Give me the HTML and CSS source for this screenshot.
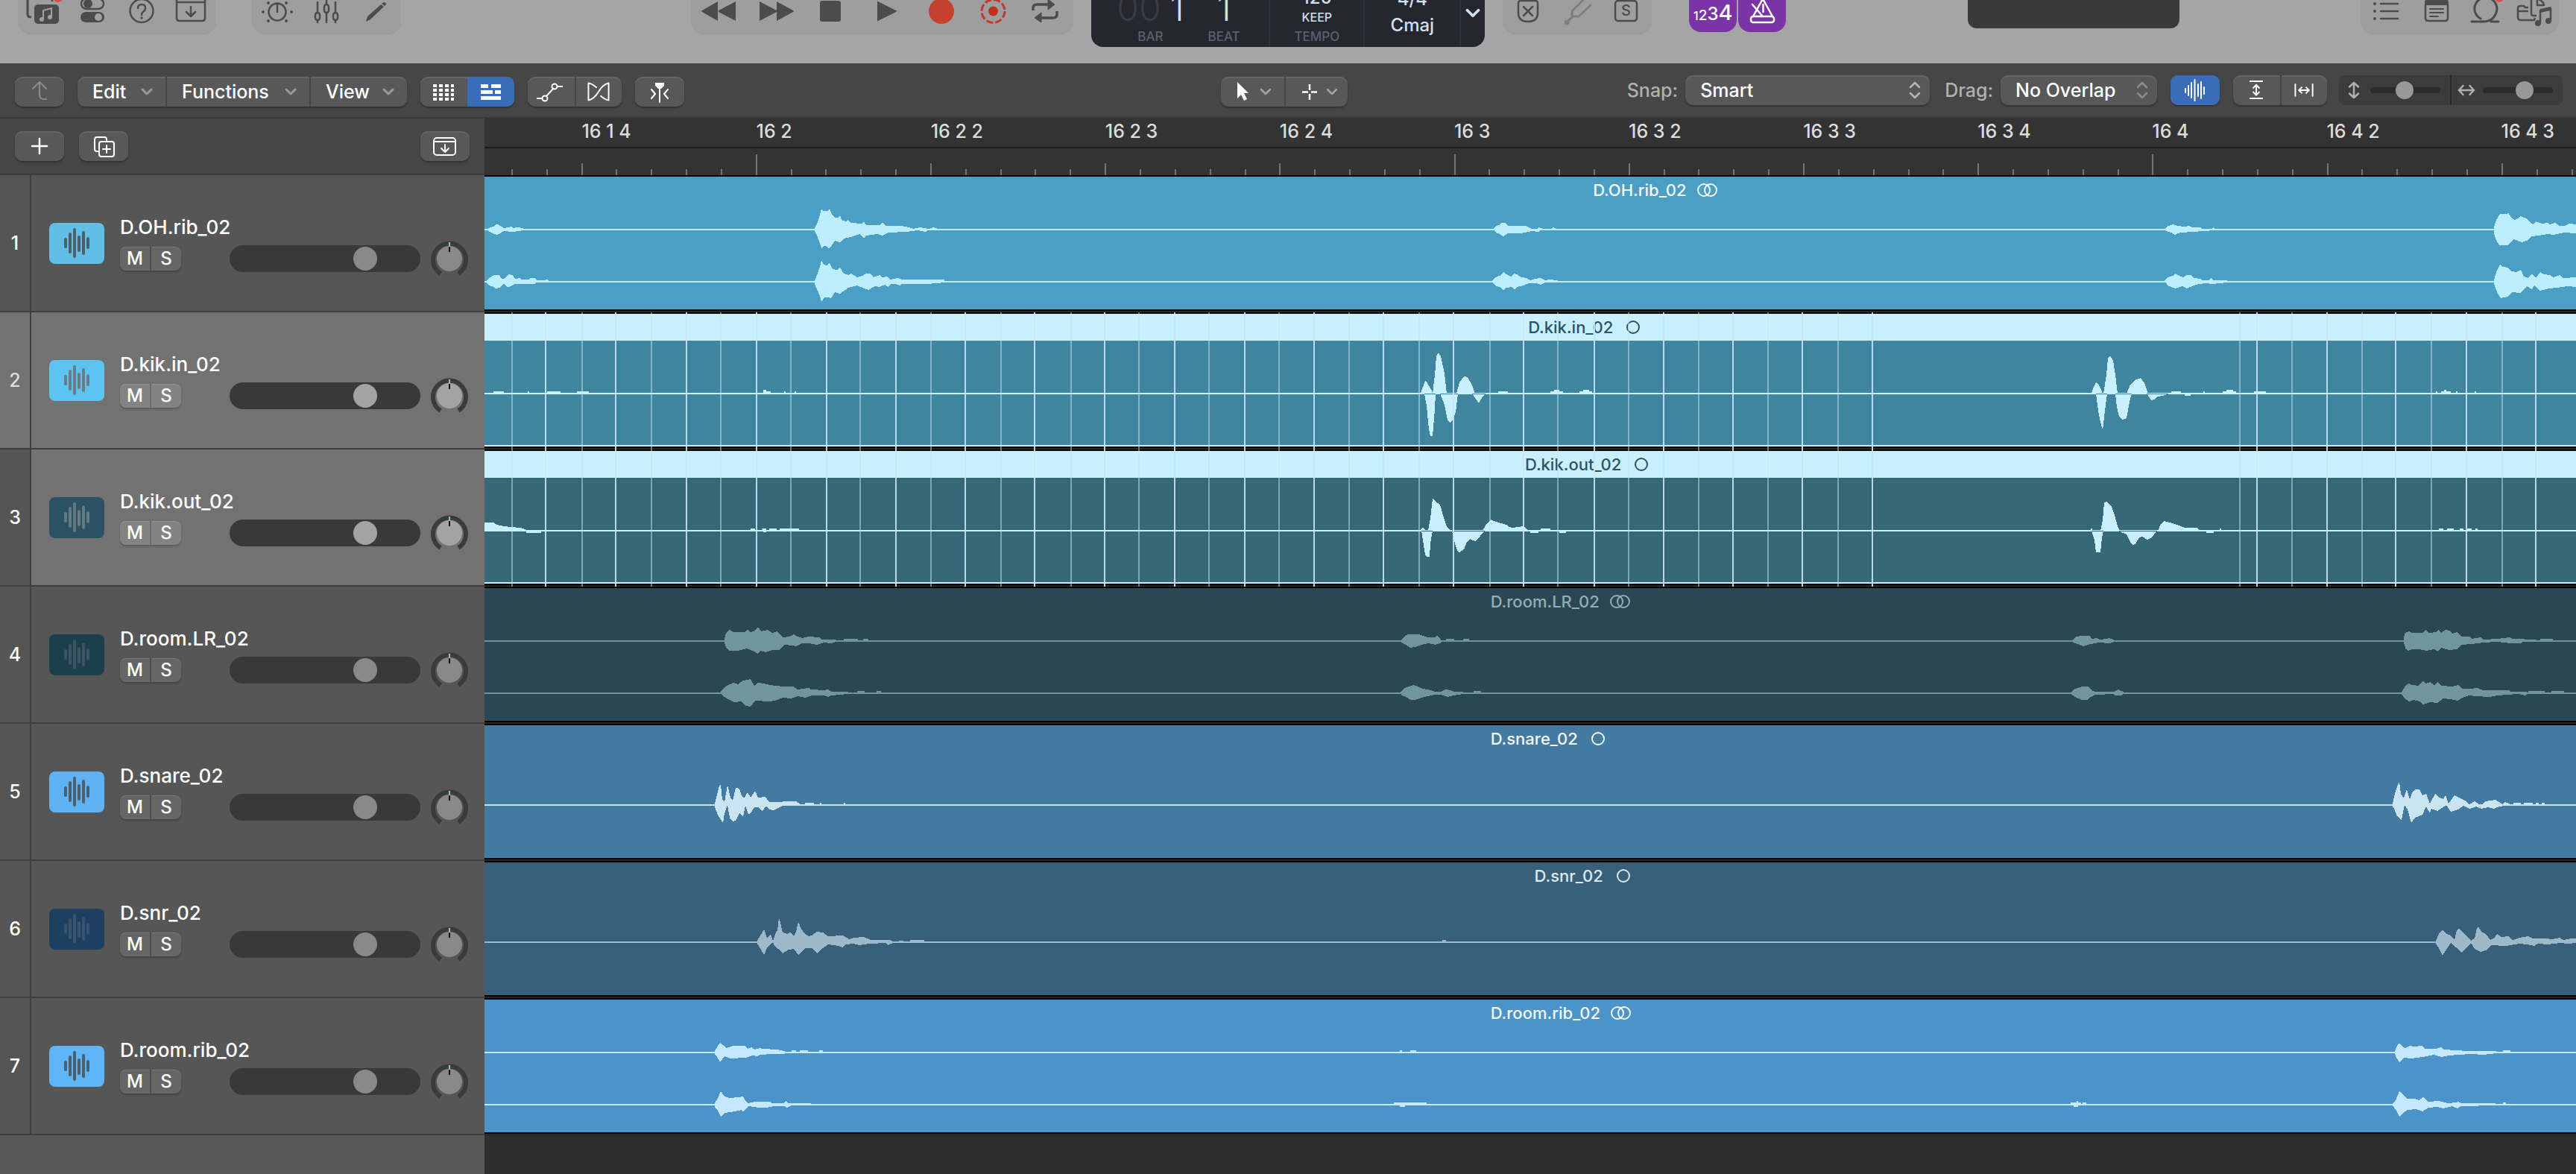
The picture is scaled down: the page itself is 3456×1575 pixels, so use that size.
FILE: index.html
```html
<!DOCTYPE html>
<html lang="en">
<head>
<meta charset="utf-8">
<meta name="viewport" content="width=device-width, initial-scale=1">
<title>Tracks</title>
<link rel="stylesheet" href="styles.css">
</head>
<body>
<svg class="defs" aria-hidden="true">
  <symbol id="chev" viewBox="0 0 16 10"><path d="M2 2l6 6 6-6" fill="none" stroke="currentColor" stroke-width="3" stroke-linecap="round" stroke-linejoin="round"/></symbol>
  <symbol id="wave" viewBox="0 0 36 40"><path d="M3 15v10M9 8v24M15 2v36M21 12v18M27 6v28M33 14v12" fill="none" stroke="currentColor" stroke-width="4" stroke-linecap="round"/></symbol>
  <symbol id="knob" viewBox="0 0 50 50"><path d="M13 46A22 22 0 1 1 37 46" fill="none" stroke="#3b3b3b" stroke-width="6"/><circle cx="25" cy="26" r="17" fill="currentColor"/><path d="M25 4v6" stroke="#8fce88" stroke-width="2"/><path d="M25 10v7" stroke="#111" stroke-width="2"/></symbol>
  <symbol id="mono" viewBox="0 0 22 22"><circle cx="11" cy="11" r="8" fill="none" stroke="currentColor" stroke-width="2"/></symbol>
  <symbol id="stereo" viewBox="0 0 30 22"><g fill="none" stroke="currentColor" stroke-width="2"><circle cx="11" cy="11" r="8"/><circle cx="20" cy="11" r="8"/></g></symbol>
  <symbol id="transients" viewBox="0 0 2806 184" preserveAspectRatio="none">
    <path class="t-weak" d="M37 0v184M131 0v184M224 0v184M317 0v184M411 0v184M504 0v184M599 0v184M693 0v184M787 0v184M878 0v184M972 0v184M1066 0v184M1160 0v184M1254 0v184M1349 0v184M1440 0v184M1535 0v184M1629 0v184M1722 0v184M1816 0v184M2355 0v184M2425 0v184M2519 0v184M2612 0v184M2707 0v184"/>
    <path class="t-strong" d="M82 0v184M176 0v184M271 0v184M365 0v184M459 0v184M552 0v184M645 0v184M738 0v184M832 0v184M926 0v184M1020 0v184M1113 0v184M1206 0v184M1300 0v184M1394 0v184M1489 0v184M1582 0v184M1675 0v184M1768 0v184M1862 0v184M2378 0v184M2472 0v184M2564 0v184M2659 0v184M2752 0v184"/>
  </symbol>
</svg>

<header class="controlbar">
  <div class="cb-left">
    <div class="cb-group">
      <button type="button" aria-label="Library"><svg viewBox="0 0 66 44"><path d="M45 2V-6H16q-4 0-4 4V19q0 4 5 4" fill="none" stroke="#4c4c4c" stroke-width="3"/><rect x="21" y="6" width="33" height="26" rx="5" fill="#4c4c4c"/><path d="M33 26V14l11-3v12" fill="none" stroke="#a0a0a0" stroke-width="2"/><circle cx="31" cy="26" r="3" fill="#a0a0a0"/><circle cx="42" cy="23" r="3" fill="#a0a0a0"/><circle cx="53" cy="-3" r="6" fill="#dd4c42"/></svg></button>
      <button type="button" aria-label="Inspector"><svg viewBox="0 0 66 44"><rect x="18" y="-2" width="30" height="14" rx="7" fill="none" stroke="#4c4c4c" stroke-width="2.5"/><circle cx="27" cy="5" r="6" fill="#4c4c4c"/><rect x="17" y="16" width="32" height="14" rx="7" fill="#4c4c4c"/><circle cx="41" cy="23" r="5" fill="#a0a0a0"/></svg></button>
      <button type="button" aria-label="Quick Help"><svg viewBox="0 0 66 44"><circle cx="33" cy="14.5" r="15.5" fill="none" stroke="#4c4c4c" stroke-width="2.5"/><path d="M28 11q0-5 5-5t5 5q0 3-3 5-2 1-2 4" fill="none" stroke="#4c4c4c" stroke-width="2.5" stroke-linecap="round"/><circle cx="33" cy="24" r="1.7" fill="#4c4c4c"/></svg></button>
      <button type="button" aria-label="Toolbar"><svg viewBox="0 0 66 44" fill="none" stroke="#4c4c4c" stroke-width="2.5"><path d="M14-8V24q0 4 4 4H48q4 0 4-4V-8M14 3H52"/><path d="M33 9v12M27 16l6 6 6-6" stroke-linecap="round" stroke-linejoin="round"/></svg></button>
    </div>
    <div class="cb-group">
      <button type="button" aria-label="Smart Controls"><svg viewBox="0 0 66 44"><circle cx="33" cy="16" r="11.5" fill="none" stroke="#4c4c4c" stroke-width="2.5"/><path d="M33 5v12" stroke="#4c4c4c" stroke-width="2.5"/><g fill="#4c4c4c"><circle cx="14" cy="16" r="2"/><circle cx="52" cy="16" r="2"/><circle cx="21" cy="28" r="2"/><circle cx="45" cy="28" r="2"/><circle cx="21" cy="4" r="2"/><circle cx="45" cy="4" r="2"/><circle cx="33" cy="-2" r="2"/></g></svg></button>
      <button type="button" aria-label="Mixer"><svg viewBox="0 0 66 44" fill="none" stroke="#4c4c4c" stroke-width="2.5" stroke-linecap="round"><path d="M21 3v13M21 27v3M33-2v7M33 18v12M45 3v13M45 27v3"/><rect x="18" y="17" width="6" height="10" rx="3"/><rect x="30" y="6" width="6" height="11" rx="3"/><rect x="42" y="17" width="6" height="10" rx="3"/></svg></button>
      <button type="button" aria-label="Editors"><svg viewBox="0 0 66 44"><path d="M20 29l2-7L40 6l4 3-18 17zM41 5l3-2q3 0 3 3l-2 2z" fill="#4c4c4c"/></svg></button>
    </div>
  </div>

  <div class="cb-center">
    <div class="cb-group transport">
      <button type="button" aria-label="Rewind"><svg viewBox="0 0 73 44"><path d="M14 14L35 2v26L14 16q-2-1 0-2zM36 14L59 2v26L36 16z" fill="#4c4c4c"/></svg></button>
      <button type="button" aria-label="Forward"><svg viewBox="0 0 73 44"><path d="M18 2v26l23-12v-2zM41 2v26l22-12q2-1 0-2z" fill="#4c4c4c"/></svg></button>
      <button type="button" aria-label="Stop"><svg viewBox="0 0 73 44"><rect x="26" y="1" width="28" height="28" rx="3" fill="#4c4c4c"/></svg></button>
      <button type="button" aria-label="Play"><svg viewBox="0 0 73 44"><path d="M30 2v26q0 1 1 0l24-12q2-1 0-2L31 2q-1-1-1 0z" fill="#4c4c4c"/></svg></button>
      <button type="button" aria-label="Record"><svg viewBox="0 0 73 44"><circle cx="43" cy="15" r="17" fill="#c5402f"/></svg></button>
      <button type="button" aria-label="Capture Recording"><svg viewBox="0 0 73 44"><circle cx="39.5" cy="15" r="15.5" fill="none" stroke="#c0392b" stroke-width="3" stroke-dasharray="9.2 3"/><circle cx="39.5" cy="15" r="6.5" fill="#c0301f"/></svg></button>
      <button type="button" aria-label="Cycle"><svg viewBox="0 0 73 44" fill="none" stroke="#4c4c4c" stroke-width="3.5"><path d="M20 14v-3q0-5 5-5h20M52 15v4q0 5-5 5H27"/><path d="M40-1l9 7-9 7zM31 17l-9 7 9 6z" fill="#4c4c4c" stroke-width="1"/></svg></button>
    </div>
    <div class="lcd">
      <div class="lcd-cell lcd-position">
        <div class="lcd-col"><span class="lcd-digits"><span class="ghost">00</span>1</span><span class="lcd-label">BAR</span></div>
        <div class="lcd-col"><span class="lcd-digits">1</span><span class="lcd-label">BEAT</span></div>
      </div>
      <div class="lcd-cell lcd-tempo"><span class="lcd-value">120</span><span class="lcd-keep">KEEP</span><span class="lcd-label">TEMPO</span></div>
      <div class="lcd-cell lcd-key"><span class="lcd-value">4/4</span><span class="lcd-value lcd-keyname">Cmaj</span></div>
      <button type="button" class="lcd-menu" aria-label="Display mode"><svg width="20" height="13"><use href="#chev"/></svg></button>
    </div>
    <div class="cb-group">
      <button type="button" aria-label="Replace"><svg viewBox="0 0 66 44" fill="none" stroke="#4c4c4c" stroke-width="2.5"><path d="M20 4q0-3 3-3H43q3 0 3 3V17Q46 29 33 29T20 17z"/><path d="M27 9l12 12M39 9L27 21" stroke-linecap="round"/></svg></button>
      <button type="button" aria-label="Tuner" disabled><svg viewBox="0 0 66 44" fill="none" stroke="#7f7f7f" stroke-width="3" stroke-linecap="round" stroke-linejoin="round"><path d="M19 30l8-8M41 0L26 15v7h9L51 7"/><circle cx="19" cy="30" r="2" fill="#7f7f7f"/></svg></button>
      <button type="button" aria-label="Solo"><svg viewBox="0 0 66 44"><rect x="18" y="1" width="29" height="27" rx="4" fill="none" stroke="#4c4c4c" stroke-width="2.5"/><text x="32.5" y="21" text-anchor="middle" font-size="20" font-weight="500" fill="#4c4c4c">S</text></svg></button>
    </div>
  </div>

  <div class="cb-modes">
    <button type="button" class="mode count" aria-label="Count In"><span class="n1">1</span><span class="n2">2</span><span class="n3">3</span><span class="n4">4</span></button>
    <button type="button" class="mode" aria-label="Metronome"><svg viewBox="0 0 64 44" fill="none" stroke="#fff" stroke-width="2.5" stroke-linecap="round" stroke-linejoin="round"><path d="M20 22L31 2q2-4 4 0L46 22"/><rect x="17" y="22" width="31" height="8" rx="3"/><path d="M19 6l13 15M33.5 6v10"/></svg></button>
  </div>

  <div class="cb-right">
    <div class="master-display"></div>
  </div>
  <div class="cb-group cb-browsers">
    <button type="button" aria-label="List Editors"><svg viewBox="0 0 66 44"><g fill="#4c4c4c"><circle cx="18" cy="5" r="2"/><circle cx="18" cy="15" r="2"/><circle cx="18" cy="25" r="2"/></g><path d="M26 5h23M26 15h23M26 25h23" stroke="#4c4c4c" stroke-width="2.5" stroke-linecap="round"/></svg></button>
    <button type="button" aria-label="Note Pads"><svg viewBox="0 0 66 44"><path d="M20 6v18q0 4 4 4h22q4 0 4-4V6" fill="none" stroke="#4c4c4c" stroke-width="2.5"/><path d="M19 7V3q0-4 4-4h24q4 0 4 4v4z" fill="#4c4c4c"/><path d="M26 12h18M26 17h18M26 22h11" stroke="#4c4c4c" stroke-width="2" stroke-linecap="round"/></svg></button>
    <button type="button" aria-label="Loop Browser"><svg viewBox="0 0 66 44"><path d="M28 25A15 15 0 1 1 48 19Q44 29 31 29H16M42 29H52" fill="none" stroke="#4c4c4c" stroke-width="3" stroke-linecap="round"/><circle cx="53" cy="-2" r="5" fill="#dd4c42"/></svg></button>
    <button type="button" aria-label="Browsers"><svg viewBox="0 0 66 44"><g fill="none" stroke="#4c4c4c" stroke-width="2.5" stroke-linejoin="round"><path d="M26 10h-4l-2-2h-5q-3 0-3 3v12q0 4 4 4h18l1-3M12 15h14M30-4V18q0 3 3 3h4M38-1v8h9q0-5-9-9"/><path d="M42 31V14l14-3v17"/></g><path d="M42 12l14-3v5l-14 3z" fill="#4c4c4c"/><circle cx="39" cy="31" r="4" fill="#4c4c4c"/><circle cx="53" cy="28" r="4" fill="#4c4c4c"/></svg></button>
  </div>
</header>

<nav class="menubar" aria-label="Tracks area menu">
  <div class="mb-left">
    <div class="seg"><button type="button" class="icon-btn dim" disabled aria-label="Leave folder"><svg viewBox="0 0 66 40" fill="none" stroke="#8c8c8c" stroke-width="2" stroke-linecap="round" stroke-linejoin="round"><path d="M24 16l9-9 9 9M33 7v17q0 7 9 6"/></svg></button></div>
    <div class="seg">
      <button type="button" class="menu-btn m-edit">Edit<svg width="16" height="10"><use href="#chev"/></svg></button>
      <button type="button" class="menu-btn m-func">Functions<svg width="16" height="10"><use href="#chev"/></svg></button>
      <button type="button" class="menu-btn m-view">View<svg width="16" height="10"><use href="#chev"/></svg></button>
    </div>
    <div class="seg">
      <button type="button" class="icon-btn" aria-label="Live Loops grid"><svg viewBox="0 0 63 40"><path d="M17 12h28M17 18h28M17 24h28M17 30h28" stroke="#fff" stroke-width="4" stroke-dasharray="5 3"/></svg></button>
      <button type="button" class="icon-btn on" aria-label="Tracks view"><svg viewBox="0 0 63 40"><path d="M18 10h10v5H18zM32 10h13v5H32zM18 18h16v5H18zM37 18h8v5h-8zM18 26h27v5H18z" fill="#fff"/></svg></button>
    </div>
    <div class="seg">
      <button type="button" class="icon-btn" aria-label="Automation"><svg viewBox="0 0 63 40" fill="none" stroke="#fff" stroke-width="2"><path d="M12 29h7M25 26l10-11M40 13h7"/><circle cx="23" cy="29" r="3.5"/><circle cx="36" cy="13" r="3.5"/></svg></button>
      <button type="button" class="icon-btn" aria-label="Flex"><svg viewBox="0 0 63 40" fill="none" stroke="#fff" stroke-width="2" stroke-linecap="round" stroke-linejoin="round"><path d="M28 14q-6-5-11-6v24q8-2 14-12t14-12v24q-5-1-11-6"/></svg></button>
    </div>
    <div class="seg"><button type="button" class="icon-btn" aria-label="Catch playhead"><svg viewBox="0 0 66 40"><path d="M27 8h12v4l-4 4h-4l-4-4z" fill="#fff"/><path d="M33 14v20M22 17l5 6-5 6M44 17l-5 6 5 6" fill="none" stroke="#fff" stroke-width="2" stroke-linecap="round" stroke-linejoin="round"/></svg></button></div>
  </div>

  <div class="seg mb-tools">
    <button type="button" class="tool-btn" aria-label="Pointer tool"><svg viewBox="0 0 85 40"><path d="M22 7v22l5-5 4 8 4-2-4-8h6z" fill="#fff"/><path d="M54 17l6 6 6-6" fill="none" stroke="#a3a3a3" stroke-width="2.5" stroke-linecap="round" stroke-linejoin="round"/></svg></button>
    <button type="button" class="tool-btn" aria-label="Marquee tool"><svg viewBox="0 0 85 40"><path d="M32 10v8M32 23v8M22 20.5h8M34 20.5h8" stroke="#fff" stroke-width="2.5"/><path d="M56 17l6 6 6-6" fill="none" stroke="#a3a3a3" stroke-width="2.5" stroke-linecap="round" stroke-linejoin="round"/></svg></button>
  </div>

  <div class="mb-right">
    <label for="snap">Snap:</label>
    <div class="select-wrap snap"><select id="snap"><option>Smart</option></select><svg viewBox="0 0 16 24" width="16" height="24"><path d="M2 8l6-6 6 6M2 16l6 6 6-6" fill="none" stroke="#b5b5b5" stroke-width="2.5" stroke-linecap="round" stroke-linejoin="round"/></svg></div>
    <label for="drag">Drag:</label>
    <div class="select-wrap drag"><select id="drag"><option>No Overlap</option></select><svg viewBox="0 0 16 24" width="16" height="24"><path d="M2 8l6-6 6 6M2 16l6 6 6-6" fill="none" stroke="#8c8c8c" stroke-width="2.5" stroke-linecap="round" stroke-linejoin="round"/></svg></div>
    <div class="seg seg-wave"><button type="button" class="icon-btn on" aria-label="Waveform zoom"><svg viewBox="0 0 66 40" fill="none" stroke="#fff" stroke-width="2" stroke-linecap="round"><path d="M20 18v5M24 14v13M28 10v20M32.5 6v28M37 12v16M41 9v22M45 16v9"/></svg></button></div>
    <div class="seg seg-zoom">
      <button type="button" class="icon-btn" aria-label="Vertical auto zoom"><svg viewBox="0 0 63 40" fill="none" stroke="#fff" stroke-width="2"><path d="M22 8h18M22 31h18M31 13v13M26.5 17.5L31 13l4.5 4.5M26.5 22L31 26.5l4.5-4.5"/></svg></button>
      <button type="button" class="icon-btn" aria-label="Horizontal auto zoom"><svg viewBox="0 0 63 40" fill="none" stroke="#fff" stroke-width="2"><path d="M19 11v18M43 11v18M24 20h14M28.5 15.5L24 20l4.5 4.5M33.5 15.5L38 20l-4.5 4.5"/></svg></button>
    </div>
    <div class="zoom-panel">
      <div class="zoom-part"><svg viewBox="0 0 24 24" width="24" height="24" fill="none" stroke="#b0b0b0" stroke-width="2.5" stroke-linecap="round" stroke-linejoin="round"><path d="M12 2v20M6 7.5L12 2l6 5.5M6 16.5L12 22l6-5.5"/></svg><input type="range" class="zoom" aria-label="Vertical zoom" min="0" max="100" value="48"></div>
      <div class="zoom-part"><svg viewBox="0 0 24 24" width="24" height="24" fill="none" stroke="#b0b0b0" stroke-width="2.5" stroke-linecap="round" stroke-linejoin="round"><path d="M2 12h20M7.5 6L2 12l5.5 6M16.5 6L22 12l-5.5 6"/></svg><input type="range" class="zoom" aria-label="Horizontal zoom" min="0" max="100" value="63"></div>
    </div>
  </div>
</nav>

<main class="workspace">
  <section class="headers" aria-label="Track headers">
    <div class="headers-bar">
      <button type="button" class="square-btn" aria-label="Add track"><svg viewBox="0 0 66 40" stroke="#fff" stroke-width="2.5" stroke-linecap="round"><path d="M33 10v20M23 20h20"/></svg></button>
      <button type="button" class="square-btn" aria-label="Duplicate track"><svg viewBox="0 0 66 40" fill="none" stroke="#fff" stroke-width="2" stroke-linecap="round"><path d="M26 27h-2q-3 0-3-3V11q0-3 3-3h10q3 0 3 3v1"/><rect x="27" y="14" width="20" height="20" rx="3"/><path d="M37 19v10M32 24h10"/></svg></button>
      <button type="button" class="square-btn push" aria-label="Track import"><svg viewBox="0 0 66 40" fill="none" stroke="#fff" stroke-width="2" stroke-linecap="round" stroke-linejoin="round"><rect x="18" y="9" width="29" height="23" rx="4"/><path d="M18 14h29M33 18v9M28 23l5 5 5-5"/></svg></button>
    </div>
    <ol class="track-list">
      <li class="track"><span class="num">1</span><span class="tile c1"><svg width="36" height="40"><use href="#wave"/></svg></span><div class="info"><span class="name">D.OH.rib_02</span><div class="ms"><button type="button">M</button><button type="button">S</button></div></div><input type="range" class="vol" aria-label="D.OH.rib_02 volume" min="0" max="1000" value="745"><button type="button" class="pan" aria-label="D.OH.rib_02 pan"><svg width="50" height="50"><use href="#knob"/></svg></button></li>
      <li class="track selected current"><span class="num">2</span><span class="tile c2"><svg width="36" height="40"><use href="#wave"/></svg></span><div class="info"><span class="name">D.kik.in_02</span><div class="ms"><button type="button">M</button><button type="button">S</button></div></div><input type="range" class="vol" aria-label="D.kik.in_02 volume" min="0" max="1000" value="745"><button type="button" class="pan" aria-label="D.kik.in_02 pan"><svg width="50" height="50"><use href="#knob"/></svg></button></li>
      <li class="track selected"><span class="num">3</span><span class="tile c3"><svg width="36" height="40"><use href="#wave"/></svg></span><div class="info"><span class="name">D.kik.out_02</span><div class="ms"><button type="button">M</button><button type="button">S</button></div></div><input type="range" class="vol" aria-label="D.kik.out_02 volume" min="0" max="1000" value="745"><button type="button" class="pan" aria-label="D.kik.out_02 pan"><svg width="50" height="50"><use href="#knob"/></svg></button></li>
      <li class="track"><span class="num">4</span><span class="tile c4"><svg width="36" height="40"><use href="#wave"/></svg></span><div class="info"><span class="name">D.room.LR_02</span><div class="ms"><button type="button">M</button><button type="button">S</button></div></div><input type="range" class="vol" aria-label="D.room.LR_02 volume" min="0" max="1000" value="745"><button type="button" class="pan" aria-label="D.room.LR_02 pan"><svg width="50" height="50"><use href="#knob"/></svg></button></li>
      <li class="track"><span class="num">5</span><span class="tile c5"><svg width="36" height="40"><use href="#wave"/></svg></span><div class="info"><span class="name">D.snare_02</span><div class="ms"><button type="button">M</button><button type="button">S</button></div></div><input type="range" class="vol" aria-label="D.snare_02 volume" min="0" max="1000" value="745"><button type="button" class="pan" aria-label="D.snare_02 pan"><svg width="50" height="50"><use href="#knob"/></svg></button></li>
      <li class="track"><span class="num">6</span><span class="tile c6"><svg width="36" height="40"><use href="#wave"/></svg></span><div class="info"><span class="name">D.snr_02</span><div class="ms"><button type="button">M</button><button type="button">S</button></div></div><input type="range" class="vol" aria-label="D.snr_02 volume" min="0" max="1000" value="745"><button type="button" class="pan" aria-label="D.snr_02 pan"><svg width="50" height="50"><use href="#knob"/></svg></button></li>
      <li class="track"><span class="num">7</span><span class="tile c7"><svg width="36" height="40"><use href="#wave"/></svg></span><div class="info"><span class="name">D.room.rib_02</span><div class="ms"><button type="button">M</button><button type="button">S</button></div></div><input type="range" class="vol" aria-label="D.room.rib_02 volume" min="0" max="1000" value="745"><button type="button" class="pan" aria-label="D.room.rib_02 pan"><svg width="50" height="50"><use href="#knob"/></svg></button></li>
    </ol>
  </section>

  <section class="timeline" aria-label="Tracks">
    <div class="ruler">
      <ol class="ruler-labels"><li>16 1 4</li><li>16 2</li><li>16 2 2</li><li>16 2 3</li><li>16 2 4</li><li>16 3</li><li>16 3 2</li><li>16 3 3</li><li>16 3 4</li><li>16 4</li><li>16 4 2</li><li>16 4 3</li></ol>
      <svg class="ruler-ticks" viewBox="0 0 2806 36" preserveAspectRatio="none" aria-hidden="true"><path d="M37 28v8M84 28v8M131 20v16M177 28v8M224 28v8M271 28v8M318 28v8M365 8v28M412 28v8M458 28v8M505 28v8M552 28v8M599 20v16M646 28v8M693 28v8M739 28v8M786 28v8M833 20v16M880 28v8M927 28v8M974 28v8M1021 28v8M1067 20v16M1114 28v8M1161 28v8M1208 28v8M1255 28v8M1302 8v28M1348 28v8M1395 28v8M1442 28v8M1489 28v8M1536 20v16M1583 28v8M1629 28v8M1676 28v8M1723 28v8M1770 20v16M1817 28v8M1864 28v8M1911 28v8M1957 28v8M2004 20v16M2051 28v8M2098 28v8M2145 28v8M2192 28v8M2238 8v28M2285 28v8M2332 28v8M2379 28v8M2426 28v8M2473 20v16M2519 28v8M2566 28v8M2613 28v8M2660 28v8M2707 20v16M2754 28v8M2801 28v8"/></svg>
    </div>

    <div class="lane r1">
      <div class="region">
        <div class="region-name">D.OH.rib_02<svg width="30" height="22"><use href="#stereo"/></svg></div>
        <svg class="audio" viewBox="0 0 2806 178" preserveAspectRatio="none"><path d="M0 70h2806v2H0zM0 140h2806v2H0z
M3 71L5 69 12 67 16 64 18 64 23 67 26 69 36 67 38 69 44 68 52 69 52 72 38 74 26 73 21 76 17 78 13 77 5 73z
M2 141L3 139 6 136 13 132 20 132 23 137 27 137 32 131 38 132 41 137 48 136 49 138 59 138 62 136 68 136 70 139 80 139 83 138 86 139 86 142 70 142 67 144 41 144 33 148 30 148 26 144 20 149 15 150 12 148 5 145z
M443 69L447 61 450 51 452 43 454 46 461 46 463 43 466 50 470 55 474 55 477 52 480 59 485 60 488 58 491 62 506 63 509 60 512 65 530 65 534 62 538 66 560 66 569 68 575 70 584 68 596 70 602 68 609 70 610 72 594 72 592 74 581 72 566 74 542 75 534 79 527 77 512 79 509 83 503 77 491 81 482 83 477 88 470 86 464 95 461 96 458 93 455 93 452 96 449 86 446 79 443 73z
M443 139L447 130 450 121 452 112 455 118 459 119 463 116 467 124 473 125 477 122 482 130 488 132 492 130 500 135 507 133 512 130 518 130 522 135 530 132 533 135 540 134 545 138 554 136 560 138 617 138 618 142 594 144 560 144 557 146 552 144 545 144 542 148 537 145 530 148 524 147 515 152 507 149 500 146 488 149 477 157 470 155 465 163 461 162 456 162 452 168 450 160 446 151 443 144z
M1354 70L1357 66 1361 65 1364 62 1369 62 1373 66 1397 66 1401 68 1405 70 1412 70 1414 68 1420 70 1431 70 1434 68 1438 70 1438 72 1416 72 1414 74 1405 73 1390 76 1373 76 1367 80 1362 77 1357 75z
M1352 139L1357 135 1364 132 1367 128 1371 131 1377 134 1381 130 1385 131 1391 135 1398 136 1403 139 1409 137 1417 136 1423 139 1428 138 1440 139 1440 142 1423 142 1417 145 1411 143 1401 143 1394 146 1385 148 1382 152 1378 148 1371 149 1367 152 1362 148 1357 147 1354 144z
M2255 69L2259 66 2266 64 2271 66 2281 67 2287 66 2291 68 2302 68 2305 70 2317 70 2319 68 2322 70 2322 72 2305 73 2292 74 2275 75 2268 78 2263 75 2256 73z
M2254 139L2258 135 2265 133 2268 130 2274 133 2279 135 2284 132 2289 132 2293 136 2302 137 2305 139 2313 139 2316 136 2320 139 2338 139 2338 142 2318 144 2310 143 2300 144 2293 146 2284 150 2278 147 2268 150 2258 146z
M2696 68L2699 58 2704 50 2713 50 2715 48 2719 55 2724 58 2728 56 2732 53 2739 56 2744 61 2749 64 2752 60 2760 63 2768 62 2771 64 2778 62 2784 66 2791 66 2797 63 2806 64 2806 76 2790 75 2775 78 2768 77 2756 79 2746 80 2740 86 2733 88 2728 86 2722 84 2714 92 2703 92 2699 85 2696 76z
M2696 139L2699 128 2704 118 2708 121 2715 122 2719 127 2726 128 2732 125 2736 134 2742 136 2747 130 2752 136 2758 128 2763 131 2771 132 2776 135 2784 132 2789 136 2806 135 2806 148 2795 147 2780 149 2770 150 2758 153 2750 146 2747 151 2740 147 2731 156 2720 155 2714 161 2705 163 2701 157 2696 144z"/></svg>
      </div>
    </div>

    <div class="lane r2 picked">
      <div class="region">
        <div class="region-name">D.kik.in_02<svg width="22" height="22"><use href="#mono"/></svg></div>
        <svg class="audio" viewBox="0 0 2806 178" preserveAspectRatio="none"><path d="M0 106h2806v2H0z
M12 104h14v3h-14zM58 104h2v3h-2zM84 104h18v3h-18zM124 104h16v3h-16zM374 107v-5h4v2h6v3zM402 104h2v3h-2zM416 104h2v3h-2z
M1256 107L1259 98 1262 90 1265 93 1268 98 1271 103 1272 107z
M1261 107L1264 124 1267 155 1269 164 1272 164 1275 128 1276 107z
M1272 107L1275 82 1277 57 1280 52 1283 57 1288 80 1291 107z
M1282 107L1288 122 1292 142 1295 146 1299 143 1303 132 1306 107z
M1304 107L1308 92 1314 84 1319 85 1325 96 1329 107z
M1325 107L1334 120 1339 111 1344 107z
M1360 104h13v3h-13zM1430 107v-3h5v-2h7v2h5v3zM1469 107v-3h5v-2h8v2h4v3z
M2156 107L2159 98 2162 92 2166 96 2170 104 2171 107z
M2162 107L2165 130 2168 145 2171 156 2174 130 2177 107z
M2172 107L2176 82 2178 60 2181 56 2185 63 2188 82 2191 107z
M2188 107L2190 125 2193 138 2198 142 2203 140 2207 118 2210 107z
M2203 107L2208 95 2214 89 2222 86 2227 93 2232 107z
M2230 107L2236 116 2240 115 2245 111 2255 109 2260 107z
M2263 104h13v3h-13zM2281 107h8v3h-8zM2306 104h2v3h-2zM2332 107v-3h5v-2h9v2h4v3zM2374 104h16v3h-16zM2618 104h2v3h-2zM2625 107v-3h4v-2h3v2h6v3zM2645 104h2v3h-2zM2670 104h2v3h-2z"/></svg>
      </div>
      <svg class="marks" aria-hidden="true"><use href="#transients"/></svg>
    </div>

    <div class="lane r3 picked">
      <div class="region">
        <div class="region-name">D.kik.out_02<svg width="22" height="22"><use href="#mono"/></svg></div>
        <svg class="audio" viewBox="0 0 2806 178" preserveAspectRatio="none"><path d="M0 106h2806v2H0z
M0 107V96h12L17 99 26 101 35 102 48 103 55 105 56 107zM56 107h20v3h-20zM357 104h6v3h-6zM372 104h6v5h-4zM382 104h10v3h-10zM396 104h26v3h-26z
M1256 106L1259 102 1262 106z
M1257 107L1259 120 1262 139 1264 142 1268 142 1269 124 1272 107z
M1266 107L1269 90 1272 64 1275 67 1282 72 1287 90 1291 101 1296 107z
M1298 107L1302 124 1305 134 1308 136 1314 132 1318 122 1322 118 1329 121 1336 114 1342 107z
M1339 107L1345 97 1350 92 1357 95 1371 99 1374 102 1380 103 1394 101 1398 105 1400 107z
M1403 107h11v3h-11zM1417 104h13v3h-13zM1442 107h9v3h-9z
M2154 107l2-4 2 4z
M2156 107L2160 120 2162 136 2168 136 2170 116 2172 107z
M2168 107L2171 93 2173 69 2176 68 2183 74 2187 86 2191 101 2194 107z
M2192 107L2203 112 2208 122 2211 126 2215 125 2220 116 2224 115 2231 119 2237 116 2244 107z
M2245 107L2249 98 2253 94 2261 96 2274 100 2281 103 2297 103 2302 107z
M2310 107h10v3h-10zM2328 104h2v3h-2zM2622 104h6v3h-6zM2633 104h9v3h-9zM2650 104h5v3h-5zM2660 104h6v3h-6zM2671 104h3v3h-3z"/></svg>
      </div>
      <svg class="marks" aria-hidden="true"><use href="#transients"/></svg>
    </div>

    <div class="lane r4">
      <div class="region">
        <div class="region-name">D.room.LR_02<svg width="30" height="22"><use href="#stereo"/></svg></div>
        <svg class="audio" viewBox="0 0 2806 178" preserveAspectRatio="none"><path d="M0 70h2806v2H0zM0 140h2806v2H0z
M322 68L324 60 329 56 334 59 349 59 353 56 357 59 363 57 367 52 371 58 380 56 386 60 393 58 400 66 409 65 415 62 420 65 426 67 435 65 449 66 452 69 471 69 471 72 465 74 455 73 446 76 435 74 426 74 418 78 413 77 402 76 395 83 386 83 378 86 370 84 367 88 362 85 352 81 340 84 329 84 324 80 322 73zM482 68h19v2h-19zM508 68h7v2h-7z
M317 139L323 132 334 127 340 129 347 124 357 122 362 131 366 127 375 128 383 130 400 132 414 132 420 136 435 134 438 136 455 137 461 136 466 139 488 139 488 142 465 144 461 146 455 144 440 144 430 147 420 145 412 148 400 147 393 150 383 152 363 151 357 159 350 158 345 152 335 153 325 148 319 144zM500 138h10v2h-10zM526 138h6v2h-6z
M1229 70L1234 65 1239 62 1254 62 1262 65 1266 66 1275 66 1278 64 1283 69 1284 73 1276 76 1267 74 1260 75 1252 78 1242 80 1236 76 1230 73zM1290 68h11v2h-11zM1313 68h8v2h-8z
M1229 140L1234 134 1243 131 1247 130 1252 132 1259 135 1269 137 1276 139 1283 139 1289 136 1296 137 1301 139 1313 139 1313 142 1300 144 1292 146 1284 143 1275 143 1265 145 1257 147 1248 150 1243 150 1236 146 1230 144zM1327 138h10v2h-10z
M2131 69L2136 65 2141 64 2154 64 2156 68 2163 67 2167 69 2176 68 2179 67 2186 69 2186 72 2180 74 2165 73 2155 75 2145 78 2138 75 2131 73z
M2128 140L2134 135 2143 132 2152 132 2156 137 2161 139 2186 139 2192 136 2199 139 2199 142 2196 144 2187 144 2186 142 2161 143 2155 146 2150 150 2143 150 2134 146 2128 142z
M2575 66L2577 60 2582 58 2586 60 2600 60 2604 56 2609 60 2618 59 2621 56 2625 60 2631 56 2636 57 2640 61 2647 59 2652 65 2663 65 2666 68 2678 66 2682 69 2701 68 2717 66 2721 68 2753 69 2753 72 2735 72 2732 74 2718 74 2700 72 2682 73 2666 75 2652 76 2646 82 2636 83 2625 80 2621 85 2616 82 2605 84 2596 82 2586 82 2580 84 2577 80 2575 73zM2758 68h17v2h-17z
M2572 140L2577 131 2582 128 2586 130 2595 131 2601 124 2604 128 2610 126 2616 130 2621 126 2625 131 2640 132 2648 130 2654 135 2663 135 2674 134 2681 137 2703 137 2717 137 2718 139 2740 139 2740 142 2738 144 2728 142 2700 144 2690 146 2672 145 2662 144 2654 147 2647 151 2638 149 2628 148 2620 154 2610 153 2601 156 2596 152 2588 150 2582 152 2576 148 2572 142zM2742 138h22v2h-22zM2773 138h17v2h-17z"/></svg>
      </div>
    </div>

    <div class="lane r5">
      <div class="region">
        <div class="region-name">D.snare_02<svg width="22" height="22"><use href="#mono"/></svg></div>
        <svg class="audio" viewBox="0 0 2806 178" preserveAspectRatio="none"><path d="M0 106h2806v2H0z
M309 105L311 97 315 81 317 80 319 100 322 103 326 80 330 97 333 101 337 84 342 85 345 95 348 98 353 90 357 97 363 88 367 97 377 96 382 103 418 102 423 105 423 108 400 108 388 114 382 113 378 108 373 115 367 110 362 110 357 118 354 119 350 108 347 122 342 118 337 128 333 129 329 124 326 107 322 118 320 131 314 122 311 115 309 109zM430 104h12v3h-12zM450 104h2v3h-2zM482 104h2v3h-2z
M2560 105L2563 92 2566 82 2569 76 2571 92 2575 98 2579 86 2583 100 2586 90 2591 86 2596 86 2600 94 2605 92 2610 105 2617 92 2622 97 2628 99 2631 94 2635 105 2643 94 2649 97 2657 101 2663 106 2670 102 2676 106 2680 107 2684 102 2698 100 2703 103 2708 106 2710 103 2716 105 2718 107 2703 109 2696 112 2688 110 2679 112 2672 109 2663 112 2655 108 2648 113 2638 116 2632 107 2620 115 2612 112 2610 118 2605 109 2600 120 2595 122 2590 124 2585 131 2580 113 2576 107 2572 127 2566 122 2562 112 2560 109zM2722 104h10v3h-10zM2736 104h12v3h-12zM2752 104h4v3h-4zM2760 104h4v3h-4z"/></svg>
      </div>
    </div>

    <div class="lane r6">
      <div class="region">
        <div class="region-name">D.snr_02<svg width="22" height="22"><use href="#mono"/></svg></div>
        <svg class="audio" viewBox="0 0 2806 178" preserveAspectRatio="none"><path d="M0 106h2806v2H0z
M366 105L370 98 375 90 379 101 384 96 387 105 391 94 393 91 395 74 397 81 400 94 406 96 410 94 415 99 418 93 421 80 425 89 429 95 435 99 439 98 446 93 454 94 461 99 481 98 489 103 495 101 509 100 518 104 544 104 548 106 548 108 541 111 538 108 518 109 508 110 503 111 495 109 485 110 480 114 475 112 461 110 450 118 446 122 440 115 430 115 421 124 415 116 408 117 400 122 394 116 389 112 387 107 384 109 379 115 375 124 371 117 366 109zM556 105h6v2h-6zM571 104h19v2h-19zM1285 104h5v2h-5z
M2618 105L2622 96 2627 90 2631 95 2638 98 2643 104 2646 91 2649 88 2654 94 2665 105 2670 102 2673 88 2675 86 2679 93 2685 96 2691 104 2697 101 2700 96 2706 100 2715 99 2721 104 2730 101 2742 99 2748 102 2764 102 2775 103 2784 101 2789 104 2800 102 2806 102 2806 108 2795 109 2785 108 2768 110 2755 109 2750 112 2740 110 2730 109 2712 112 2692 111 2685 118 2678 120 2670 116 2665 108 2660 113 2653 121 2645 114 2638 108 2630 120 2627 125 2622 115 2618 109z"/></svg>
      </div>
    </div>

    <div class="lane r7">
      <div class="region">
        <div class="region-name">D.room.rib_02<svg width="30" height="22"><use href="#stereo"/></svg></div>
        <svg class="audio" viewBox="0 0 2806 178" preserveAspectRatio="none"><path d="M0 70h2806v2H0zM0 140h2806v2H0z
M309 69L313 62 316 58 320 61 325 65 333 62 350 62 353 66 358 64 363 67 369 65 373 66 392 67 403 69 403 73 385 73 370 74 366 76 360 75 350 78 330 79 322 76 316 84 312 77 309 73zM412 68h6v2h-6zM423 68h11v2h-11zM449 68h5v2h-5z
M309 139L313 132 317 123 322 130 329 132 340 131 347 130 350 136 354 139 363 137 383 137 385 139 402 139 404 136 408 139 438 139 438 142 412 142 406 145 402 143 388 143 378 145 368 145 354 143 347 151 345 148 330 151 322 152 317 157 313 149 309 144z
M1228 68h3v2h-3zM1242 68h8v2h-8zM1220 138h44v2h-44zM1228 142h7v2h-7zM2128 138h8v-2h2v2h4v3h-4v3h-6v-3h-4zM2144 138h5v2h-5z
M2563 69L2566 62 2569 58 2573 63 2577 65 2583 62 2588 63 2599 62 2604 66 2618 66 2625 64 2629 67 2645 68 2661 69 2699 69 2699 72 2682 74 2665 73 2635 75 2626 77 2615 74 2600 77 2585 79 2575 78 2569 84 2565 78 2563 73zM2708 68h10v2h-10z
M2560 140L2564 135 2569 123 2574 127 2579 133 2589 133 2595 135 2601 131 2607 137 2622 136 2634 139 2645 138 2648 137 2652 139 2698 139 2698 142 2652 143 2647 146 2640 143 2628 146 2620 144 2608 145 2600 150 2592 147 2580 148 2573 153 2569 157 2565 149 2560 142zM2708 138h4v2h-4z"/></svg>
      </div>
    </div>
  </section>
</main>
</body>
</html>
```

FILE: styles.css
```css
* { box-sizing: border-box; }

body {
  margin: 0;
  min-height: 100vh;
  display: flex;
  flex-direction: column;
  background: #2d2d2d;
  color: #fff;
  font-family: Inter, "Liberation Sans", sans-serif;
  font-size: 25px;
  font-weight: 500;
}

button, select, input { font: inherit; color: inherit; margin: 0; }
button { border: 0; padding: 0; background: none; }
ol { list-style: none; margin: 0; padding: 0; }
svg { display: block; flex: none; }
.defs { position: absolute; width: 0; height: 0; }

/* Control bar */
.controlbar {
  height: 85px;
  padding: 0 23px 0 24px;
  display: grid;
  grid-template-columns: auto 64fr auto 50px auto 40fr auto 40fr auto;
  align-items: start;
  background: #a5a5a5;
  overflow: hidden;
}
.cb-left { grid-column: 1; display: flex; gap: 48px; }
.cb-center { grid-column: 3; display: flex; gap: 24px; }
.cb-modes { grid-column: 5; display: flex; gap: 2px; }
.cb-right { grid-column: 7; }
.cb-browsers { grid-column: 9; }
.cb-group {
  display: flex;
  height: 45px;
  padding: 0 1px;
  border-radius: 0 0 18px 18px;
  background: #9e9e9e;
  box-shadow: 0 1px 0 #999;
}
.cb-group button { width: 66px; height: 44px; overflow: hidden; }
.cb-group svg { width: 100%; height: 44px; }
.cb-group.transport button { width: 73px; }

.lcd {
  width: 528px;
  height: 63px;
  display: flex;
  overflow: hidden;
  border-radius: 0 0 16px 16px;
  background: #25262e;
  color: #cfe0ee;
}
.lcd-cell {
  height: 63px;
  display: flex;
  flex-direction: column;
  justify-content: flex-end;
  align-items: center;
  border-right: 2px solid #30313a;
}
.lcd-position { width: 240px; flex-direction: row; align-items: flex-end; justify-content: flex-start; padding-left: 34px; gap: 32px; }
.lcd-col { display: flex; flex-direction: column; align-items: center; }
.lcd-digits { font-size: 48px; font-weight: 300; line-height: 48px; }
.ghost { margin-right: 12px; color: #3a3b45; }
.lcd-label { font-size: 17px; font-weight: 500; line-height: 28px; color: #5b6070; }
.lcd-tempo { width: 127px; }
.lcd-keep { font-size: 16px; line-height: 24px; }
.lcd-key { width: 129px; padding-bottom: 8px; }
.lcd-value { font-size: 24px; line-height: 28px; }
.lcd-keyname { line-height: 42px; }
.lcd-menu { width: 32px; height: 34px; display: flex; align-items: center; justify-content: center; }

.mode { width: 64px; height: 43px; border-radius: 0 0 16px 16px; background: #7a34a6; }
.mode svg { width: 64px; height: 44px; }
.count { display: flex; align-items: baseline; justify-content: center; line-height: 34px; }
.n1 { font-size: 16px; }
.n2 { font-size: 19px; }
.n3 { font-size: 24px; }
.n4 { font-size: 29px; }
.master-display { width: 284px; height: 38px; border-radius: 0 0 12px 12px; background: #3a3a3a; }

/* Menu bar */
.menubar {
  height: 74px;
  padding: 0 18px 0 20px;
  display: grid;
  grid-template-columns: auto 25fr auto 13fr auto;
  align-items: center;
  background: #464646;
  border-bottom: 2px solid #3a3a3a;
}
.mb-left { grid-column: 1; display: flex; gap: 18px; padding-top: 4px; }
.mb-tools { grid-column: 3; margin-top: 4px; }
.mb-right { grid-column: 5; display: flex; align-items: center; }
.mb-right label { color: #b0b0b0; line-height: 32px; }
.mb-right label + .select-wrap { margin-left: 10px; }
.select-wrap + label { margin-left: 20px; }

.seg, .square-btn, .select-wrap {
  background: #585858;
  border-radius: 10px;
  box-shadow: 0 2px 2px #333, inset 0 2px 0 #656565;
}
.seg { display: flex; height: 40px; overflow: hidden; }
.seg button + button { border-left: 2px solid #454545; }
.icon-btn { width: 63px; height: 40px; }
.icon-btn svg { width: 100%; height: 40px; }
.seg:first-child .icon-btn, .seg:last-child .icon-btn, .seg-wave .icon-btn { width: 66px; }
.seg .on { background: #3a6db8; }
.seg .on:last-child { border-left: 0; }
.tool-btn { width: 85px; height: 40px; }
.tool-btn svg { width: 85px; height: 40px; }
.menu-btn { display: flex; align-items: center; justify-content: space-between; height: 40px; padding: 0 17px 0 20px; }
.menu-btn svg { color: #9a9a9a; }
.m-edit { width: 118px; }
.m-func { width: 193px; }
.m-view { width: 131px; }

.select-wrap { display: grid; align-items: center; height: 40px; }
.select-wrap > * { grid-area: 1 / 1; }
.select-wrap svg { justify-self: end; margin-right: 12px; pointer-events: none; }
.select-wrap select { appearance: none; width: 100%; height: 40px; padding: 0 20px; border: 0; background: none; }
.snap { width: 328px; }
.drag { width: 210px; }
.seg-wave { margin-left: 18px; }
.seg-zoom { margin-left: 18px; }
.zoom-panel { display: flex; height: 40px; margin-left: 16px; border-radius: 8px; background: #3c3c3c; }
.zoom-part { width: 149px; display: flex; align-items: center; justify-content: space-between; padding: 0 13px 0 8px; }
.zoom-part + .zoom-part { width: 151px; border-left: 2px solid #2c2c2c; }

input[type="range"] { appearance: none; }
.zoom { width: 94px; height: 8px; border-radius: 4px; background: #2c2c2c; }
.zoom::-webkit-slider-thumb { appearance: none; width: 24px; height: 24px; border-radius: 50%; background: #989898; }

/* Track headers */
.workspace { flex: 1; display: grid; grid-template-columns: 650px minmax(0, 1fr); }
.headers { background: #585858; }
.headers-bar {
  height: 76px;
  padding: 0 20px;
  display: flex;
  align-items: center;
  gap: 20px;
  background: #464646;
  border-bottom: 2px solid #3c3c3c;
}
.square-btn { width: 66px; height: 40px; }
.square-btn svg { width: 66px; height: 40px; }
.push { margin-left: auto; }

.track {
  height: 184px;
  display: grid;
  grid-template-columns: 42px 24px 74px 21px 82px 65px 256px 14px 50px;
  align-items: center;
  background: #565656;
  border-bottom: 2px solid #3e3e3e;
  color: #898989;
}
.selected { background: #727272; color: #a3a3a3; }
.num {
  grid-column: 1;
  align-self: stretch;
  display: flex;
  align-items: center;
  justify-content: center;
  background: #555;
  border-right: 2px solid #3e3e3e;
  color: #fff;
}
.current .num { background: #727272; color: #dedede; }
.tile { grid-column: 3; width: 74px; height: 55px; display: flex; align-items: center; justify-content: center; border-radius: 8px; color: #4d5f68; }
.c1 { background: #61bfe6; }
.c2 { background: #5bc4f0; color: #6a7d86; }
.c3 { background: #2a5263; color: #647a83; }
.c4 { background: #1c3f4e; color: #3c5460; }
.c5 { background: #5fb3f5; }
.c6 { background: #1d3f60; color: #38536d; }
.c7 { background: #5fb5f7; }
.info { grid-column: 5; display: flex; flex-direction: column; gap: 10px; color: #fff; }
.name { font-size: 26px; line-height: 32px; white-space: nowrap; }
.ms { display: flex; height: 32px; overflow: hidden; border-radius: 8px; background: #666; box-shadow: 0 2px 2px #444, inset 0 1px 0 #777; }
.ms button { flex: 1; font-size: 24px; line-height: 32px; }
.ms button + button { border-left: 2px solid #4e4e4e; }
.selected .ms { background: #838383; box-shadow: 0 2px 2px #5c5c5c, inset 0 1px 0 #939393; }
.selected .ms button + button { border-color: #6a6a6a; }
.vol { grid-column: 7; width: 256px; height: 36px; margin-top: 42px; padding: 0 2px; border-radius: 18px; background: #393939; }
.vol::-webkit-slider-thumb { appearance: none; width: 32px; height: 32px; border-radius: 50%; background: #898989; }
.selected .vol::-webkit-slider-thumb { background: #a3a3a3; }
.pan { grid-column: 9; width: 50px; height: 50px; margin-top: 40px; }

/* Timeline */
.timeline { background: #2d2d2d; overflow: hidden; }
.ruler { height: 76px; background: #333; }
.ruler-labels { display: flex; height: 40px; padding-left: 4.65%; border-bottom: 2px solid #1c1c1c; overflow: hidden; }
.ruler-labels li { flex: 0 0 8.75%; line-height: 34px; color: #dcdcdc; white-space: nowrap; }
.ruler-ticks { width: 100%; height: 36px; fill: none; stroke: #747474; stroke-width: 2; shape-rendering: crispEdges; }

.lane { display: grid; height: 184px; background: #282828; }
.lane > * { grid-area: 1 / 1; }
.region { height: 182px; display: grid; border: solid #000; border-width: 2px 0; background: var(--bg); color: var(--wave); }
.region > * { grid-area: 1 / 1; }
.region-name { display: flex; align-items: center; gap: 12px; height: 36px; font-size: 22px; line-height: 36px; color: var(--label); }
.audio { width: 100%; height: 178px; fill: var(--wave); shape-rendering: crispEdges; }
.picked .region-name { background: #c9f0ff; }
.picked .region { box-shadow: inset 0 -2px 0 #c9f0ff; }
.marks { width: 100%; height: 184px; fill: none; stroke-width: 2; shape-rendering: crispEdges; }
.t-weak { stroke: #c8e4f2; stroke-opacity: 0.5; }
.t-strong { stroke: #c8e4f5; stroke-opacity: 0.9; }

.r1 { --bg: #4b9fc5; --wave: #bdeeff; --label: #f2fbff; }
.r2 { --bg: #4085a0; --wave: #c9f0ff; --label: #2c5263; }
.r3 { --bg: #36687a; --wave: #c9f0ff; --label: #2c5263; }
.r4 { --bg: #294853; --wave: #71959f; --label: #93adb5; }
.r5 { --bg: #437aa1; --wave: #cbe4f2; --label: #f2f8fc; }
.r6 { --bg: #38607b; --wave: #9db8c9; --label: #dce8f0; }
.r7 { --bg: #4b93c9; --wave: #c4e8ff; --label: #f4faff; }

/* Region names sit at the centre of the visible part of each region */
.r1 .region-name { padding-left: 53%; }
.r2 .region-name { padding-left: 49.9%; }
.r3 .region-name { padding-left: 49.75%; }
.r4 .region-name, .r5 .region-name, .r7 .region-name { padding-left: 48.1%; }
.r6 .region-name { padding-left: 50.2%; }
.r2 .region-name, .r3 .region-name, .r5 .region-name, .r6 .region-name { gap: 16px; }
```
